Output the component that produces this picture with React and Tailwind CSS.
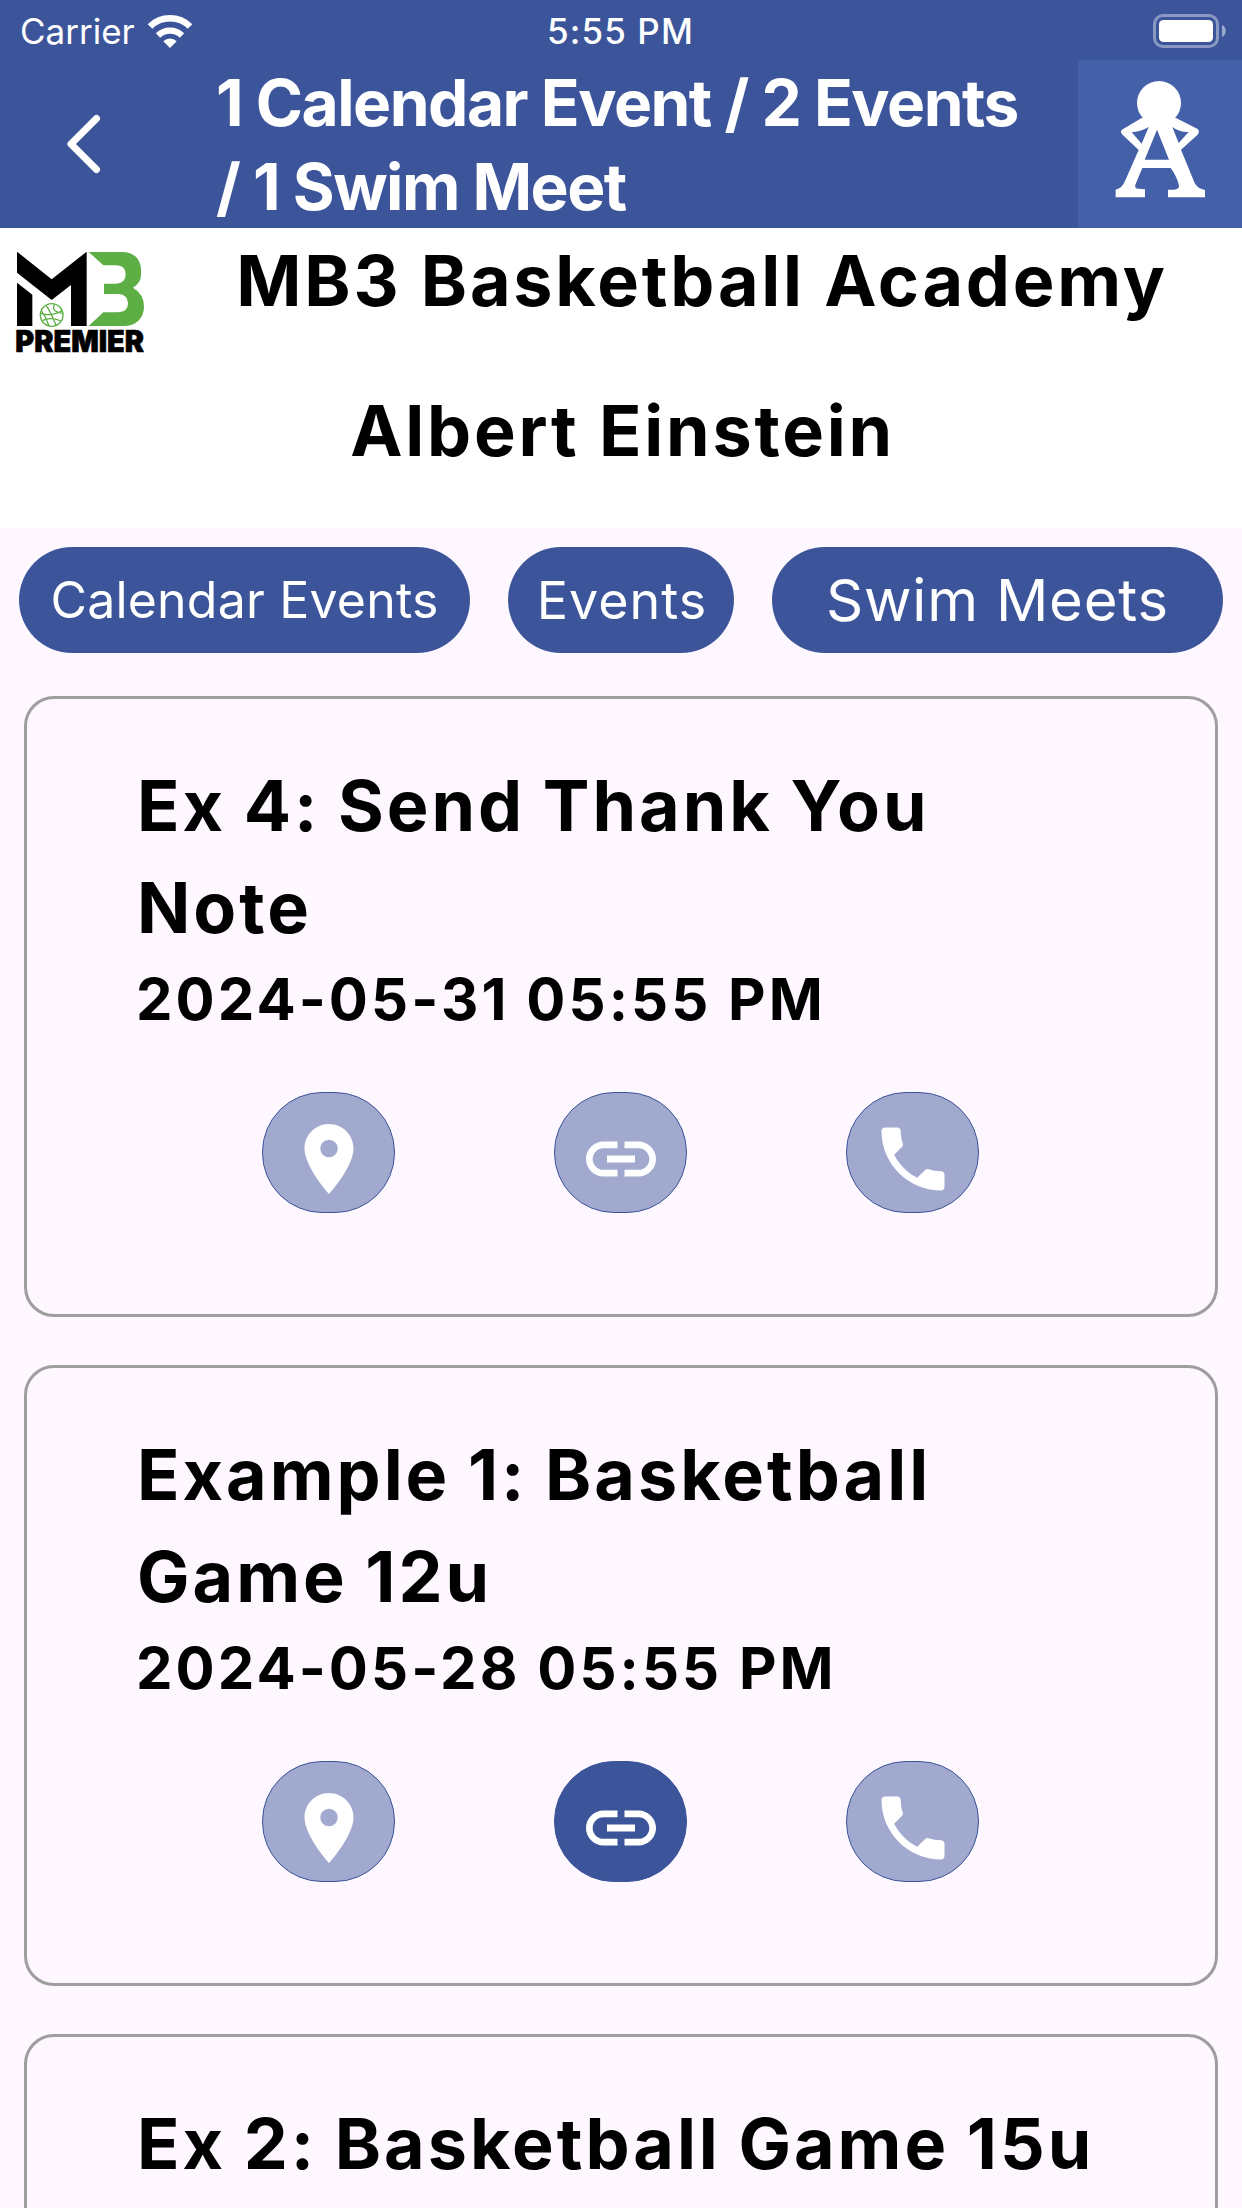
import { MdPlace, MdLink, MdPhone } from 'react-icons/md'

const cards = [
    { id: 1, title: 'Ex 4: Send Thank You Note', date: '2024-05-31 05:55 PM', link: false },
    { id: 2, title: 'Example 1: Basketball Game 12u', date: '2024-05-28 05:55 PM', link: true },
    { id: 3, title: 'Ex 2: Basketball Game 15u', date: '2024-05-28 05:55 PM', link: true },
]

function WifiIcon() {
    return (
        <svg className="w-[46px] h-[34px]" viewBox="0 0 46 34" fill="none">
            <path d="M3 12.5A28.5 28.5 0 0 1 43 12.5" stroke="white" strokeWidth="6.6" />
            <path d="M11 21.5A17.3 17.3 0 0 1 35 21.5" stroke="white" strokeWidth="6.2" />
            <path d="M16.3 27.3a9.6 9.6 0 0 1 13.4 0L23 34z" fill="white" />
        </svg>
    )
}

function BatteryIcon() {
    return (
        <svg className="w-[74px] h-[34px]" viewBox="0 0 74 34" fill="none">
            <rect x="1.5" y="1.5" width="63" height="31" rx="8.5" stroke="white" strokeOpacity="0.4" strokeWidth="3" />
            <rect x="6" y="6" width="54" height="22" rx="4.5" fill="white" />
            <path d="M69 11c5 2 5 10 0 12z" fill="white" fillOpacity="0.5" />
        </svg>
    )
}

function MascotIcon() {
    return (
        <svg className="w-[164px] h-[168px]" viewBox="24 0 492 504" fill="white">
            <circle cx="267" cy="129" r="66" />
            <path fillRule="evenodd" d="M215 174L158 208Q149 213 156 223L206 270L165 363Q157 384 137 389V412H225V388L205 386Q193 385 196 374L217 324H302C316 342 328 370 327 382Q324 388 313 389H294V412H405V390Q383 386 374 369L333 269L382 225Q391 214 383 207L318 174L267 160ZM236 201L215 251L185 217Q211 216 236 201ZM307 201Q328 217 356 216L326 249ZM261 209L297 299H224Z" />
        </svg>
    )
}

function PremierLogo() {
    return (
        <svg className="w-[152px] h-[125px]" viewBox="0 0 456 375">
            <path d="M51 38L155 121L260 38V261H213V138L155 183L51 101Z" />
            <path d="M51 131L97 167V261H51Z" />
            <path fill="#5cae45" d="M266 39H372C402 41 423 61 423 93V108Q423 131 399 146Q432 165 432 203C432 237 408 259 376 261H266L310 220H355Q384 219 384 193Q384 167 355 165H312V134H350Q377 132 377 106Q377 80 350 79H310Z" />
            <g fill="none" stroke="#5cae45" strokeWidth="4">
                <circle cx="155" cy="228" r="34" />
                <path d="M138 199Q154 221 168 259M122 223Q153 234 187 215M127 245Q150 232 183 246M147 261Q138 234 124 215M164 196Q151 217 188 223" />
            </g>
            <text x="46" y="338" textLength="386" lengthAdjust="spacingAndGlyphs" stroke="black" strokeWidth="2" className="font-['Inter'] text-[90px] font-black">PREMIER</text>
        </svg>
    )
}

function RoundButton({ icon: Icon, active }) {
    return (
        <button className={`flex w-[133px] h-[121px] items-center justify-center rounded-[60px] border border-[#3c559a] pt-3 text-white ${active ? 'bg-[#3c559a]' : 'bg-[#a1a9cf]'}`}>
            <Icon size={84} />
        </button>
    )
}

function EventCard({ title, date, link }) {
    return (
        <div className="h-[621px] shrink-0 rounded-[30px] border-3 border-[#9e9e9e] px-[110px] pt-[56px]">
            <h2 className="w-[969px] text-[70px] leading-[102px] font-bold tracking-[3px] [word-spacing:-2px]">{title}</h2>
            <p className="-ml-px text-[58px] leading-[80px] font-bold tracking-[3.05px] whitespace-nowrap">{date}</p>
            <div className="mt-[53px] flex justify-center gap-[159px] pr-px">
                <RoundButton icon={MdPlace} />
                <RoundButton icon={MdLink} active={link} />
                <RoundButton icon={MdPhone} />
            </div>
        </div>
    )
}

export default function App() {
    return (
        <div className="flex h-[2208px] w-[1242px] flex-col overflow-hidden bg-[#fef7ff] font-['Inter',sans-serif] text-black">
            <header className="h-[228px] shrink-0 bg-[#3c559a] text-white">
                <div className="grid h-[60px] grid-cols-3 items-center pl-5 pr-[15px] pt-0.5 text-[35px]">
                    <div className="flex items-center gap-3">
                        <span>Carrier</span>
                        <WifiIcon />
                    </div>
                    <span className="mr-1.5 text-center font-medium tracking-[1.1px]">5:55 PM</span>
                    <div className="flex justify-end">
                        <BatteryIcon />
                    </div>
                </div>
                <div className="flex h-[168px]">
                    <button className="w-[216px] pl-[64px]">
                        <svg className="w-[40px] h-[64px]" viewBox="0 0 40 64" fill="none" stroke="white" strokeWidth="7" strokeLinecap="round" strokeLinejoin="round">
                            <path d="M32.500 6.500L7 32L32.500 57.500" />
                        </svg>
                    </button>
                    <h1 className="w-[862px] pt-px text-[64px] leading-[84px] font-bold tracking-[-1.5px]">
                        1 Calendar Event / 2 Events<br />/ 1 Swim Meet
                    </h1>
                    <div className="w-[164px] bg-[#4460a8]">
                        <MascotIcon />
                    </div>
                </div>
            </header>

            <section className="h-[300px] shrink-0 bg-white text-[70px] font-bold tracking-[2.8px]">
                <div className="flex h-[150px]">
                    <div className="w-[160px] pt-[11px] tracking-normal">
                        <PremierLogo />
                    </div>
                    <div className="flex-1 pt-[2px] pl-[2px] text-center leading-[102px]">MB3 Basketball Academy</div>
                </div>
                <div className="pt-[2px] pl-[3px] text-center leading-[102px]">Albert Einstein</div>
            </section>

            <nav className="flex shrink-0 gap-[38px] px-[19px] pt-[19px] text-white">
                <button className="h-[106px] w-[451px] rounded-full bg-[#3c559a] text-[50px] tracking-[0.2px]">Calendar Events</button>
                <button className="h-[106px] w-[226px] rounded-full bg-[#3c559a] pt-0.5 pl-0.5 text-[52px] tracking-[1px]">Events</button>
                <button className="h-[106px] w-[451px] rounded-full bg-[#3c559a] text-[58px] tracking-[0.8px]">Swim Meets</button>
            </nav>

            <main className="flex flex-col gap-12 px-6 pt-[43px]">
                {cards.map(c => (
                    <EventCard key={c.id} {...c} />
                ))}
            </main>
        </div>
    )
}
